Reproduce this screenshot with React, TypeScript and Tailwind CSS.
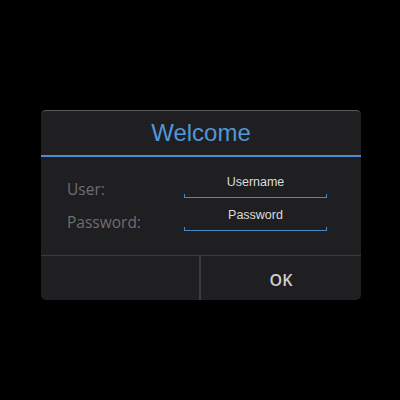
import type { ReactNode } from 'react';

function Field({ label, placeholder }: { label: string; placeholder: string }): ReactNode {
  return (
    <div className="flex h-[33px] items-end">
      <label className="mb-[-1px] w-[117px] font-['Open_Sans',sans-serif] text-[15.5px] leading-[20px] text-[#6e6e70]">
        {label}
      </label>
      <div className="relative h-[32px] w-[143px] border-x border-b border-[#4a86c4]">
        <div className="absolute inset-x-0 top-0 h-[28px] bg-[#1f1e21]" style={{ left: -1, right: -1 }} />
        <input
          className="relative mt-[2px] h-[28px] w-full bg-transparent text-center font-['Liberation_Sans',sans-serif] text-[12.5px] text-[#dcdcdc] outline-none placeholder:text-[#dcdcdc]"
          placeholder={placeholder}
          type={placeholder === 'Password' ? 'password' : 'text'}
        />
      </div>
    </div>
  );
}

export default function App(): ReactNode {
  return (
    <div className="h-[400px] w-[400px] bg-black pl-[41px] pt-[110px]">
      <div className="flex h-[190px] w-[320px] flex-col overflow-hidden rounded-[5px] border-t border-[#5a5a5c] bg-[#1f1e21]">
        <div className="flex h-[46px] items-center justify-center border-b-2 border-[#4a8fd3]">
          <h1 className="font-['Liberation_Sans',sans-serif] text-[24px] leading-none text-[#4f97d9]">Welcome</h1>
        </div>
        <div className="flex flex-1 flex-col pl-[26px] pt-[8px]">
          <Field label="User:" placeholder="Username" />
          <Field label="Password:" placeholder="Password" />
        </div>
        <div className="flex h-[45px] border-t border-[#3b3a3d]">
          <button className="w-[160px] border-r-2 border-[#3b3a3d]" />
          <button className="flex-1 pt-[3px] font-['Open_Sans',sans-serif] text-[16px] font-semibold text-[#cfcfcf]">
            OK
          </button>
        </div>
      </div>
    </div>
  );
}
